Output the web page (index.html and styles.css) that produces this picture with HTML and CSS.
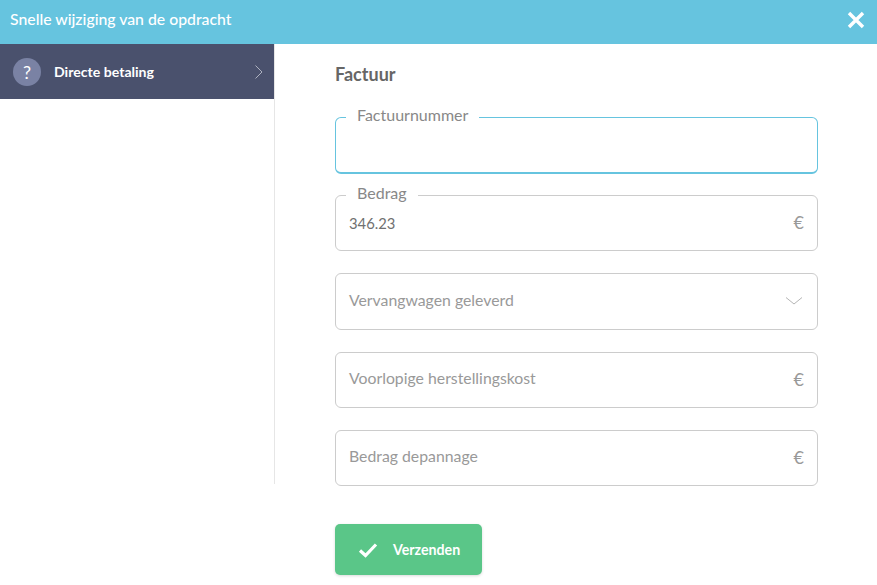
FILE: index.html
```html
<!DOCTYPE html>
<html lang="nl">
<head>
<meta charset="utf-8">
<title>Snelle wijziging van de opdracht</title>
<link rel="stylesheet" href="styles.css">
</head>
<body>
<header class="topbar">
  <h1 class="topbar-title">Snelle wijziging van de opdracht</h1>
  <svg class="close-icon" width="18" height="18" viewBox="0 0 18 18"><path d="M2 2 16 16M16 2 2 16" fill="none" stroke="#fff" stroke-width="3.4"/></svg>
</header>
<div class="main">
  <aside class="sidebar">
    <div class="side-item">
      <span class="side-badge">?</span>
      <span class="side-label">Directe betaling</span>
      <svg class="side-chevron" width="10" height="16" viewBox="0 0 10 16"><path d="M1.5 1.5 8 8 1.5 14.500" fill="none" stroke="#aeb2c0" stroke-width="1"/></svg>
    </div>
  </aside>
  <form class="form">
    <h2 class="form-title">Factuur</h2>
    <div class="field field-focus">
      <span class="legend">Factuurnummer</span>
    </div>
    <div class="field">
      <span class="legend">Bedrag</span>
      <span class="value">346.23</span>
      <span class="euro">€</span>
    </div>
    <div class="field field-select">
      <span class="placeholder">Vervangwagen geleverd</span>
      <svg class="select-chevron" width="18" height="10" viewBox="0 0 18 10"><path d="M1 1.500 9 8 17 1.500" fill="none" stroke="#b5b5b5" stroke-width="1"/></svg>
    </div>
    <div class="field">
      <span class="placeholder">Voorlopige herstellingskost</span>
      <span class="euro">€</span>
    </div>
    <div class="field">
      <span class="placeholder">Bedrag depannage</span>
      <span class="euro">€</span>
    </div>
    <button class="submit" type="button">
      <svg width="20" height="16" viewBox="0 0 20 16"><path d="M2 8.500 7.500 13.500 18 2.500" fill="none" stroke="#fff" stroke-width="3.2"/></svg>
      <span>Verzenden</span>
    </button>
  </form>
</div>
</body>
</html>
```
FILE: styles.css
```css
* { box-sizing: border-box; }
html, body { margin: 0; padding: 0; background: #fff; }
body { font-family: Lato, "Open Sans", sans-serif; color: #666; width: 877px; height: 585px; overflow: hidden; }

.topbar { height: 44px; background: #66c4df; display: flex; align-items: center; justify-content: space-between; padding: 0 12px 0 10px; }
.topbar-title { margin: 0 0 8px; font-size: 15.800px; font-weight: 500; color: #fff; }
.close-icon { display: block; margin-bottom: 4px; }

.main { display: flex; align-items: flex-start; }
.sidebar { width: 275px; height: 440px; border-right: 1px solid #e6e6e6; flex: none; }
.side-item { height: 55px; background: #4a516d; display: flex; align-items: center; padding: 0 10px 0 13px; }
.side-badge { width: 28px; height: 28px; border-radius: 50%; background: #7a82a4; color: #fff; display: flex; align-items: center; justify-content: center; font-size: 18px; flex: none; }
.side-label { margin-left: 13px; flex: 1; color: #fff; font-size: 14.100px; font-weight: 700; }
.side-chevron { display: block; }

.form { margin-left: 60px; width: 483px; display: flex; flex-direction: column; }
.form-title { margin: 0; padding-top: 20px; height: 73px; font-size: 18px; font-weight: 700; color: #666; line-height: 20px; }

.field { position: relative; height: 56px; border: 1px solid #ccc; border-radius: 6px; margin-bottom: 22px; padding: 0 13px; display: flex; align-items: center; justify-content: space-between; font-size: 15.800px; }
.field-select { height: 57px; }
.field-focus { height: 57px; border-color: #66c4df; border-bottom-width: 2px; margin-bottom: 21px; }
.legend { position: absolute; left: 10px; top: -13px; padding: 0 11px; background: #fff; color: #888; font-size: 16px; line-height: 20px; }
.value { color: #707070; font-size: 14.800px; }
.placeholder { color: #999; margin-top: -5px; }
.field-select .placeholder { margin-top: -4px; }
.euro { color: #999; font-size: 18px; margin-top: -2px; }
.select-chevron { display: block; margin-top: -1px; margin-right: 1px; }

.submit { margin-top: 16px; width: 147px; height: 51px; border: 0; border-radius: 5px; background: #5ac688; color: #fff; font-family: inherit; font-size: 14.200px; font-weight: 700; display: flex; align-items: center; padding: 0 0 0 23px; gap: 15px; box-shadow: 0 1px 3px rgba(0,0,0,.15); }
```
